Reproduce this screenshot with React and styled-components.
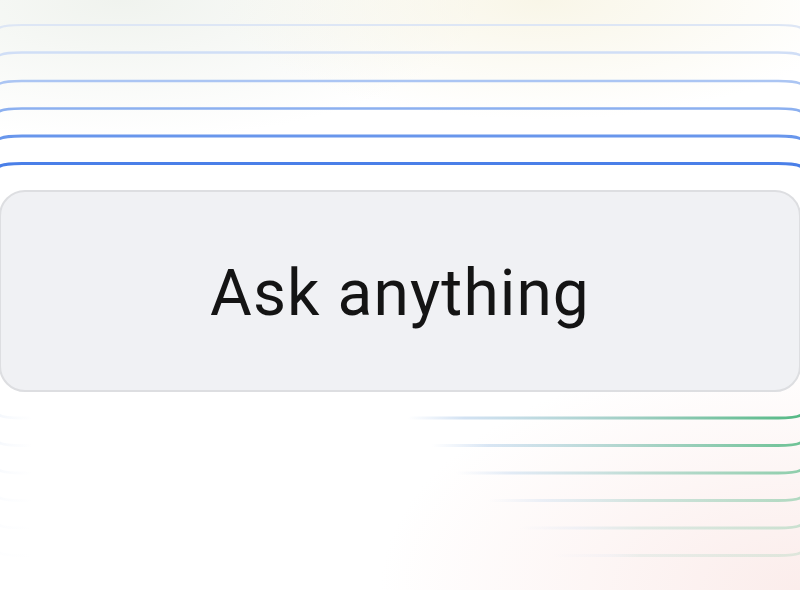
import React from 'react';
import styled, { createGlobalStyle } from 'styled-components';

const GlobalStyle = createGlobalStyle`
    html, body {
        margin: 0;
        padding: 0;
        background: #ffffff;
    }
`;

const Page = styled.div`
    width: 800px;
    height: 590px;
    overflow: hidden;
    display: flex;
    flex-direction: column;
    background:
        radial-gradient(ellipse 320px 120px at 540px 0px, rgba(246, 242, 222, 0.7), rgba(255, 255, 255, 0) 100%),
        radial-gradient(ellipse 360px 140px at 120px 0px, rgba(236, 240, 234, 0.8), rgba(255, 255, 255, 0) 100%),
        radial-gradient(ellipse 420px 240px at 800px 590px, rgba(250, 232, 230, 0.8), rgba(255, 255, 255, 0) 100%),
        #ffffff;
`;

const LineArt = styled.svg`
    display: block;
    width: 800px;
    height: ${props => props.h}px;
    flex: none;
`;

const PromptBox = styled.div`
    flex: none;
    height: 198px;
    margin: 0 -1px;
    border: 2px solid #dddee1;
    border-radius: 26px;
    background: #f0f1f4;
    display: flex;
    align-items: center;
    justify-content: center;
`;

const PromptText = styled.span`
    font-family: Roboto, "Liberation Sans", sans-serif;
    font-size: 64px;
    font-weight: 400;
    color: #141414;
    letter-spacing: 1.1px;
    margin-top: 4px;
`;

const topLines = [
    { y: 25, color: '#dde6f5', w: 2.2 },
    { y: 52.5, color: '#d0def6', w: 2.4 },
    { y: 81, color: '#abc5f3', w: 2.5 },
    { y: 108.5, color: '#8cb0f0', w: 2.6 },
    { y: 136, color: '#6896ec', w: 2.8 },
    { y: 163.5, color: '#4a7fe8', w: 3 },
];

const bottomLines = [
    { y: 26, start: 0.52, op: 1 },
    { y: 53.5, start: 0.55, op: 0.85 },
    { y: 81, start: 0.58, op: 0.65 },
    { y: 108.5, start: 0.62, op: 0.45 },
    { y: 136, start: 0.66, op: 0.3 },
    { y: 163.5, start: 0.7, op: 0.18 },
];

function TopLines() {
    return (
        <LineArt h={190} viewBox="0 0 800 190">
            {topLines.map(l => (
                <path
                    key={l.y}
                    d={`M -1 ${l.y + 3} Q 4 ${l.y} 22 ${l.y} H 778 Q 796 ${l.y} 801 ${l.y + 3}`}
                    fill="none"
                    stroke={l.color}
                    strokeWidth={l.w}
                />
            ))}
        </LineArt>
    );
}

function BottomLines() {
    return (
        <LineArt h={198} viewBox="0 0 800 198">
            <defs>
                {bottomLines.map((l, i) => (
                    <linearGradient key={i} id={`bl${i}`} x1="0" y1="0" x2="800" y2="0" gradientUnits="userSpaceOnUse">
                        <stop offset="0" stopColor="#d6e2f4" stopOpacity={0.25 * l.op} />
                        <stop offset="0.04" stopColor="#d6e2f4" stopOpacity="0" />
                        <stop offset={l.start - 0.01} stopColor="#c9daf2" stopOpacity="0" />
                        <stop offset={l.start + 0.06} stopColor="#c3d8ee" stopOpacity={0.75 * l.op} />
                        <stop offset="0.8" stopColor="#9ccdc0" stopOpacity={l.op} />
                        <stop offset="1" stopColor="#55b985" stopOpacity={l.op} />
                    </linearGradient>
                ))}
            </defs>
            {bottomLines.map((l, i) => (
                <path
                    key={l.y}
                    d={`M -1 ${l.y - 3} Q 4 ${l.y} 22 ${l.y} H 778 Q 796 ${l.y} 801 ${l.y - 3}`}
                    fill="none"
                    stroke={`url(#bl${i})`}
                    strokeWidth={2.8}
                />
            ))}
        </LineArt>
    );
}

export default function App() {
    return (
        <Page>
            <GlobalStyle />
            <TopLines />
            <PromptBox>
                <PromptText>Ask anything</PromptText>
            </PromptBox>
            <BottomLines />
        </Page>
    );
}
